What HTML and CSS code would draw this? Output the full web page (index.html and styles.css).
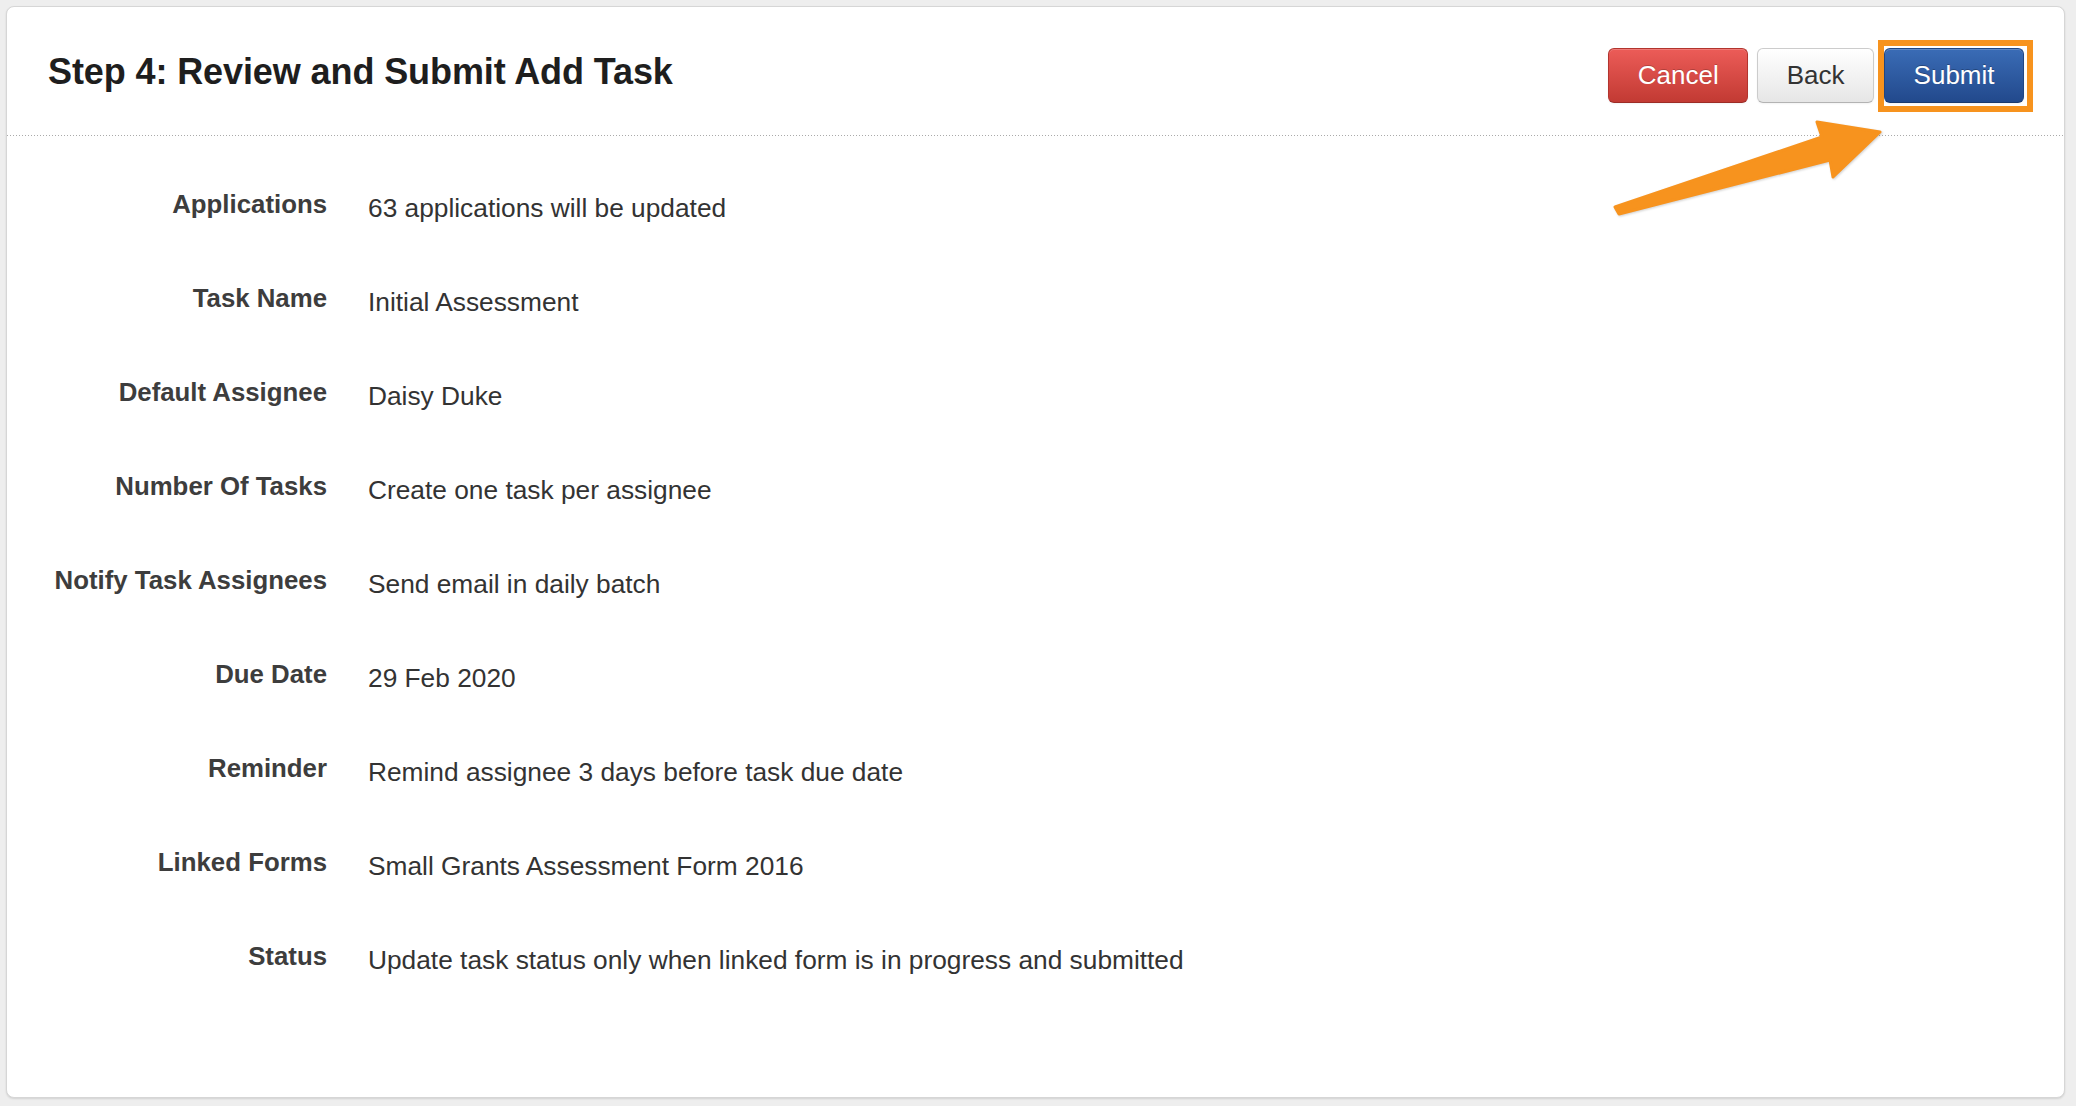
FILE: index.html
```html
<!DOCTYPE html>
<html lang="en">
<head>
<meta charset="utf-8">
<title>Step 4: Review and Submit Add Task</title>
<link rel="stylesheet" href="styles.css">
</head>
<body>
<div class="card">
  <div class="card-header">
    <h3 class="title">Step 4: Review and Submit Add Task</h3>
    <div class="actions">
      <button class="btn btn-danger">Cancel</button>
      <button class="btn btn-default">Back</button>
      <button class="btn btn-primary highlight">Submit</button>
    </div>
  </div>
  <dl class="review">
    <div class="row"><dt>Applications</dt><dd>63 applications will be updated</dd></div>
    <div class="row"><dt>Task Name</dt><dd>Initial Assessment</dd></div>
    <div class="row"><dt>Default Assignee</dt><dd>Daisy Duke</dd></div>
    <div class="row"><dt>Number Of Tasks</dt><dd>Create one task per assignee</dd></div>
    <div class="row"><dt>Notify Task Assignees</dt><dd>Send email in daily batch</dd></div>
    <div class="row"><dt>Due Date</dt><dd>29 Feb 2020</dd></div>
    <div class="row"><dt>Reminder</dt><dd>Remind assignee 3 days before task due date</dd></div>
    <div class="row"><dt>Linked Forms</dt><dd>Small Grants Assessment Form 2016</dd></div>
    <div class="row"><dt>Status</dt><dd>Update task status only when linked form is in progress and submitted</dd></div>
  </dl>
</div>
<svg class="arrow" width="300" height="110" viewBox="0 0 300 110" aria-hidden="true">
  <polygon points="15,97 222,27 217,12 280,22 233,67 230,50 19,104" fill="#f7931e" stroke="#f7931e" stroke-width="3" stroke-linejoin="round"/>
</svg>
</body>
</html>
```
FILE: styles.css
```css
html, body {
  margin: 0;
  padding: 0;
}
body {
  background: #eeeeee;
  font-family: "Liberation Sans", Arial, Helvetica, sans-serif;
  color: #333;
  position: relative;
  width: 2076px;
  height: 1106px;
  overflow: hidden;
}
.card {
  margin: 6px 11px 0 6px;
  background: #fff;
  border: 1px solid #d6d6d6;
  border-radius: 8px;
  box-shadow: 0 1px 2px rgba(0,0,0,0.12);
}
.card-header {
  box-sizing: border-box;
  height: 129px;
  padding: 41px 40px 0 41px;
  background-image: linear-gradient(to right, #aaaaaa 1px, transparent 1px);
  background-size: 3px 1px;
  background-repeat: repeat-x;
  background-position: left bottom;
  display: flex;
  justify-content: space-between;
  align-items: flex-start;
}
.title {
  margin: 2px 0 0 0;
  font-size: 36px;
  line-height: 44px;
  font-weight: bold;
  color: #1e1e1e;
  letter-spacing: -0.1px;
}
.actions {
  display: flex;
  gap: 9px;
}
.btn {
  font-family: "Liberation Sans", Arial, Helvetica, sans-serif;
  font-size: 26px;
  line-height: 31px;
  padding: 11px 28.5px;
  border-radius: 6px;
  border: 1px solid;
  cursor: pointer;
  box-shadow: inset 0 1px 0 rgba(255,255,255,0.2), 0 1px 2px rgba(0,0,0,0.05);
}
.btn-danger {
  color: #fff;
  background: linear-gradient(#ec5c58, #c23a33);
  border-color: #b2342e #b2342e #9c2c27;
  text-shadow: 0 -1px 0 rgba(0,0,0,0.2);
}
.btn-default {
  color: #333;
  background: linear-gradient(#ffffff, #e6e6e6);
  border-color: #cccccc #cccccc #b3b3b3;
}
.btn-primary {
  color: #fff;
  background: linear-gradient(#3a6cb6, #22498c);
  border-color: #214682 #214682 #1a3a6e;
  text-shadow: 0 -1px 0 rgba(0,0,0,0.25);
  margin-left: 1px;
}
.highlight {
  position: relative;
}
.highlight::after {
  content: "";
  position: absolute;
  top: -9px;
  left: -7px;
  right: -10px;
  bottom: -10px;
  border: 6px solid #f7931e;
  pointer-events: none;
}
.review {
  margin: 0;
  padding: 52px 0 63px 0;
}
.row {
  display: grid;
  grid-template-columns: 320px 1fr;
  column-gap: 41px;
  height: 94px;
  align-items: start;
}
dt {
  text-align: right;
  font-weight: bold;
  font-size: 25.8px;
  line-height: 32px;
  color: #3d3d3d;
}
dd {
  margin: 0;
  padding-top: 4px;
  font-size: 26.3px;
  line-height: 32px;
  color: #333;
}
.arrow {
  position: absolute;
  left: 1600px;
  top: 110px;
  filter: drop-shadow(1px 1px 1px rgba(0,0,0,0.18));
}
```
